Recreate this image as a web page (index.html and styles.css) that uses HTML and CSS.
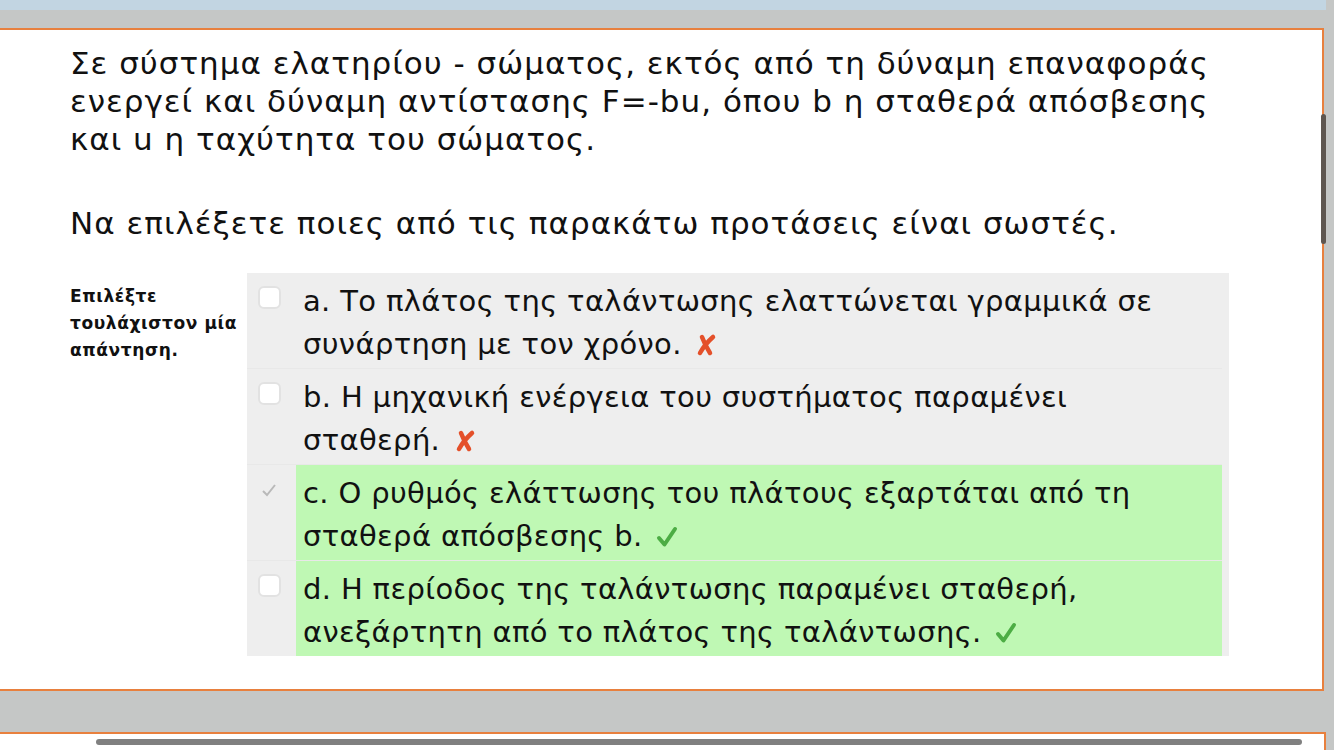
FILE: index.html
```html
<!DOCTYPE html>
<html lang="el">
<head>
<meta charset="utf-8">
<link rel="stylesheet" href="styles.css">
</head>
<body>
<div class="topbar"></div>
<div class="spacer"></div>
<div class="panel">
  <div class="qtext">
    <p>Σε σύστημα ελατηρίου - σώματος, εκτός από τη δύναμη επαναφοράς ενεργεί και δύναμη αντίστασης F=-bu, όπου b η σταθερά απόσβεσης και u η ταχύτητα του σώματος.</p>
    <p class="p2">Να επιλέξετε ποιες από τις παρακάτω προτάσεις είναι σωστές.</p>
  </div>
  <div class="ablock">
    <div class="prompt">Επιλέξτε τουλάχιστον μία απάντηση.</div>
    <div class="answers">
      <div class="opt">
        <div class="box"><span class="cb"></span></div>
        <div class="label">a. Το πλάτος της ταλάντωσης ελαττώνεται γραμμικά σε συνάρτηση με τον χρόνο. <svg class="ico" viewBox="0 0 22 24" width="22" height="24"><path d="M7 4 Q10 12 15 20" fill="none" stroke="#e4502a" stroke-width="4.5" stroke-linecap="round"/><path d="M18 4 Q10 11 5 20" fill="none" stroke="#e4502a" stroke-width="4.5" stroke-linecap="round"/></svg></div>
      </div>
      <div class="opt">
        <div class="box"><span class="cb"></span></div>
        <div class="label">b. Η μηχανική ενέργεια του συστήματος παραμένει σταθερή. <svg class="ico" viewBox="0 0 22 24" width="22" height="24"><path d="M7 4 Q10 12 15 20" fill="none" stroke="#e4502a" stroke-width="4.5" stroke-linecap="round"/><path d="M18 4 Q10 11 5 20" fill="none" stroke="#e4502a" stroke-width="4.5" stroke-linecap="round"/></svg></div>
      </div>
      <div class="opt">
        <div class="box"><svg class="tick" viewBox="0 0 16 16" width="16" height="16"><path d="M2 9 L6 13 L14 3" fill="none" stroke="#b9b9b9" stroke-width="2"/></svg></div>
        <div class="label ok">c. Ο ρυθμός ελάττωσης του πλάτους εξαρτάται από τη σταθερά απόσβεσης b. <svg class="ico" viewBox="0 0 22 24" width="22" height="24"><path d="M3 13 L8.5 19.5 L19 4" fill="none" stroke="#4cad44" stroke-width="4" stroke-linecap="round" stroke-linejoin="round"/></svg></div>
      </div>
      <div class="opt">
        <div class="box"><span class="cb"></span></div>
        <div class="label ok">d. Η περίοδος της ταλάντωσης παραμένει σταθερή, ανεξάρτητη από το πλάτος της ταλάντωσης. <svg class="ico" viewBox="0 0 22 24" width="22" height="24"><path d="M3 13 L8.5 19.5 L19 4" fill="none" stroke="#4cad44" stroke-width="4" stroke-linecap="round" stroke-linejoin="round"/></svg></div>
      </div>
    </div>
  </div>
  <div class="vscroll"></div>
</div>
<div class="gap"></div>
<div class="panel2">
  <div class="hscroll"></div>
</div>
</body>
</html>
```
FILE: styles.css
```css
html, body {
  margin: 0;
  padding: 0;
  background: #c5c7c6;
  width: 1334px;
  height: 750px;
  overflow: hidden;
  font-family: "DejaVu Sans", "Noto Sans", sans-serif;
  color: #111;
}
.topbar {
  width: 1326px;
  height: 10px;
  background: #c2d5e2;
}
.spacer { height: 18px; }
.panel {
  position: relative;
  width: 1324px;
  height: 663px;
  box-sizing: border-box;
  background: #fff;
  border-top: 2px solid #e8803e;
  border-bottom: 2px solid #e8803e;
  border-right: 2px solid #e8803e;
}
.qtext {
  padding: 14px 0 0 70px;
  font-size: 31px;
  letter-spacing: 1px;
  line-height: 38px;
  width: 1160px;
}
.qtext p { margin: 0; }
.qtext .p2 { margin-top: 46px; }
.ablock {
  display: flex;
  margin-top: 31px;
  padding-left: 70px;
}
.prompt {
  width: 177px;
  font-size: 17px;
  letter-spacing: 0.6px;
  font-weight: bold;
  line-height: 27px;
  padding-top: 10px;
}
.answers {
  width: 982px;
  background: #eeeeee;
  padding-right: 7px;
  box-sizing: border-box;
}
.opt {
  display: flex;
  border-bottom: 1px solid #e8e8e8;
}
.opt:last-child { border-bottom: none; }
.box {
  width: 49px;
  flex: none;
  padding: 13px 0 0 11px;
  box-sizing: border-box;
}
.cb {
  display: block;
  width: 19px;
  height: 19px;
  background: #fff;
  border: 2px solid #e2e2e2;
  border-radius: 6px;
}
.tick { display: block; margin: 4px 0 0 3px; }
.label {
  flex: 1;
  font-size: 29px;
  letter-spacing: 0.35px;
  line-height: 43px;
  padding: 7px 20px 2px 7px;
}
.label.ok { background: #bff8b4; }
.ico { vertical-align: -3px; margin-left: 4px; }
.vscroll {
  position: absolute;
  right: -4px;
  top: 84px;
  width: 5px;
  height: 130px;
  border-radius: 3px;
  background: #5e5650;
}
.gap { height: 41px; }
.panel2 {
  position: relative;
  width: 1324px;
  height: 20px;
  background: #fff;
  border-top: 2px solid #e8803e;
  border-right: 2px solid #e8803e;
}
.hscroll {
  position: absolute;
  left: 96px;
  top: 5px;
  width: 1206px;
  height: 6px;
  border-radius: 3px;
  background: #808080;
}
```
